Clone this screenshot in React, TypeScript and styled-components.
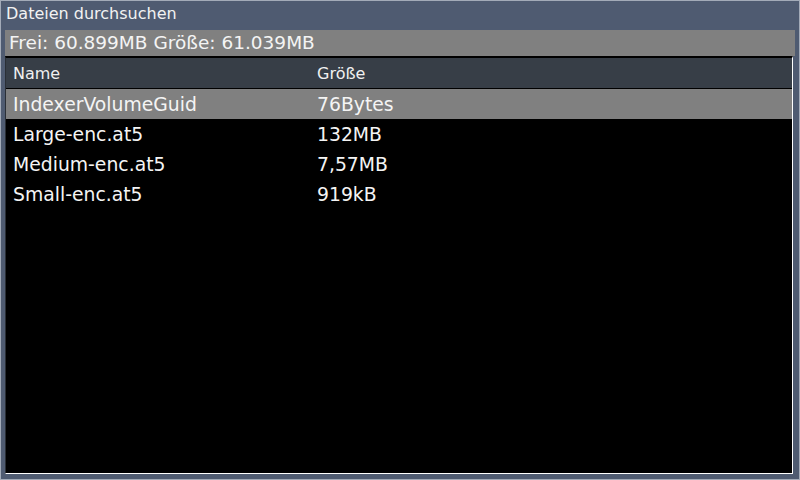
import React from "react";
import styled, { createGlobalStyle } from "styled-components";

const Global = createGlobalStyle`
  html, body { margin: 0; padding: 0; background: #4f5b71; }
  body { font-family: "DejaVu Sans", "Liberation Sans", sans-serif; }
`;

const Window = styled.div`
  box-sizing: border-box;
  width: 800px;
  height: 480px;
  background: #4f5b71;
  border: 1px solid #a3abb8;
  display: flex;
  flex-direction: column;
  padding: 0 5px 5px 4px;
`;

const Title = styled.div`
  height: 29px;
  color: #f2f2f2;
  font-size: 16px;
  line-height: 25px;
  padding-left: 1px;
`;

const InfoBar = styled.div`
  height: 26px;
  background: #808080;
  color: #f4f4f4;
  font-size: 18.5px;
  line-height: 26px;
  padding-left: 4px;
  margin-right: -1px;
`;

const ListFrame = styled.div`
  flex: 1;
  background: #000;
  border-top: 2px solid #000;
  border-left: 1px solid #2a2f36;
  border-right: 1px solid #ffffff;
  border-bottom: 1px solid #ffffff;
  margin-right: 1px;
  display: flex;
  flex-direction: column;
`;

const Header = styled.div`
  height: 30px;
  background: #373e47;
  border-bottom: 1px solid #000;
  display: grid;
  grid-template-columns: 304px 1fr;
  align-items: center;
  color: #f0f0f0;
  font-size: 16px;
  padding-left: 7px;
`;

const Row = styled.div<{ $selected?: boolean }>`
  height: 30px;
  background: ${(p) => (p.$selected ? "#808080" : "#000")};
  display: grid;
  grid-template-columns: 304px 1fr;
  align-items: center;
  color: #f4f4f4;
  font-size: 18.8px;
  padding-left: 7px;
  padding-top: 1px;
  box-sizing: border-box;
`;

const Cell = styled.span`
  white-space: nowrap;
`;

const files = [
  { name: "IndexerVolumeGuid", size: "76Bytes" },
  { name: "Large-enc.at5", size: "132MB" },
  { name: "Medium-enc.at5", size: "7,57MB" },
  { name: "Small-enc.at5", size: "919kB" },
];

export default function App() {
  return (
    <>
      <Global />
      <Window>
        <Title>Dateien durchsuchen</Title>
        <InfoBar>Frei: 60.899MB Größe: 61.039MB</InfoBar>
        <ListFrame>
          <Header>
            <Cell>Name</Cell>
            <Cell>Größe</Cell>
          </Header>
          {files.map((f, i) => (
            <Row key={f.name} $selected={i === 0}>
              <Cell>{f.name}</Cell>
              <Cell>{f.size}</Cell>
            </Row>
          ))}
        </ListFrame>
      </Window>
    </>
  );
}
